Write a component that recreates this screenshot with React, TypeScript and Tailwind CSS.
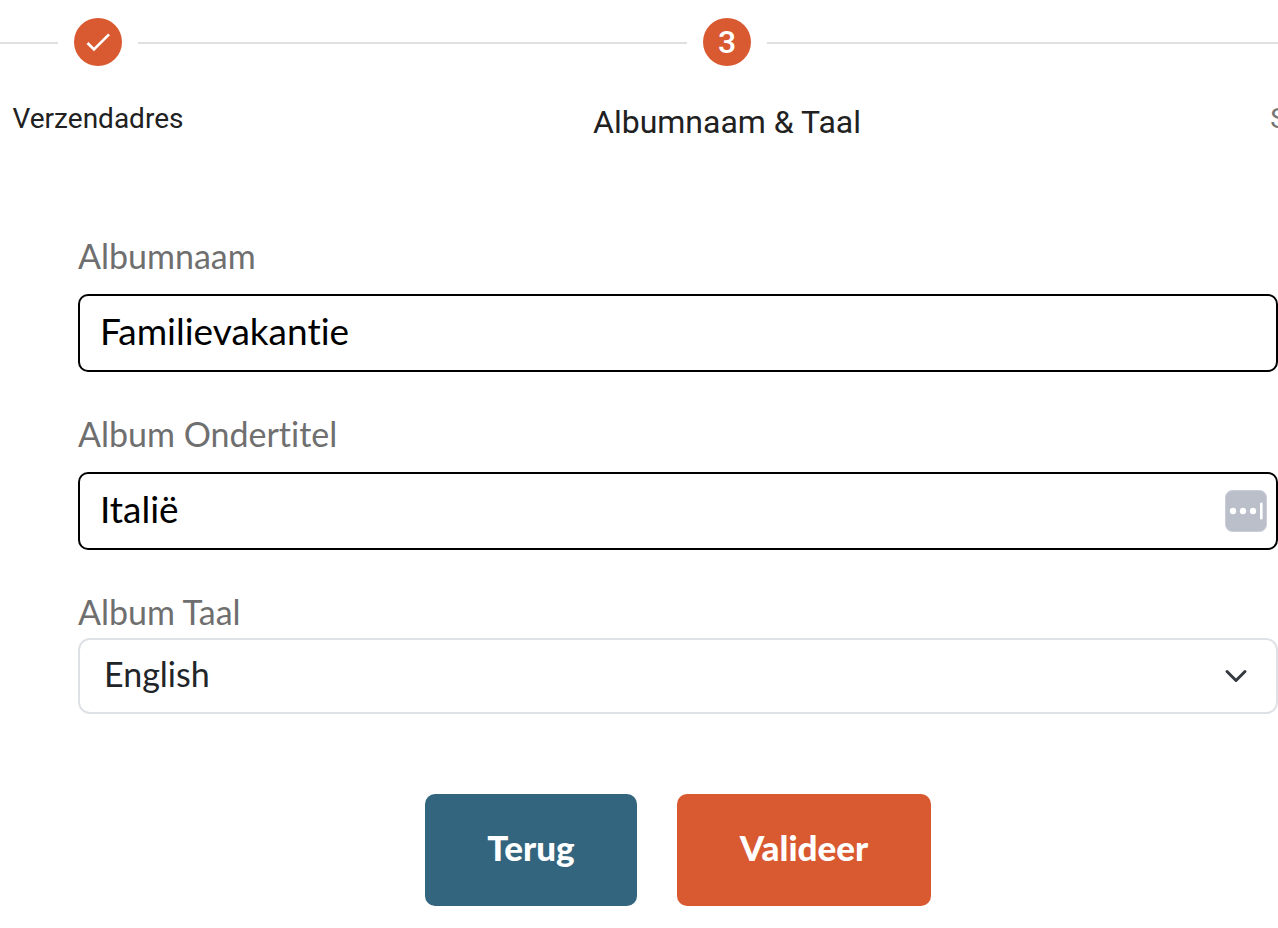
import { useState } from "react";
import type { FormEvent } from "react";

type StepStatus = "done" | "active" | "upcoming";

type Step = {
  number: number;
  label: string;
  status: StepStatus;
};

const steps: Step[] = [
  { number: 2, label: "Verzendadres", status: "done" },
  { number: 3, label: "Albumnaam & Taal", status: "active" },
  { number: 4, label: "Samenvatting", status: "upcoming" },
];

const languages = ["English", "Nederlands", "Français", "Deutsch"];

const labelClass = "block text-[34px] leading-11 text-[#6f6f6f]";
const inputClass =
  "block h-[78px] w-full rounded-[10px] border-2 border-black bg-white pr-16 pb-1.5 pl-5 text-[37px] text-black outline-none";

export default function App() {
  return (
    <main className="overflow-hidden bg-white pb-6 font-['Lato',sans-serif] [font-variant-ligatures:none]">
      <Stepper />
      <AlbumForm />
    </main>
  );
}

function Stepper() {
  return (
    <ol className="-mr-44 flex pt-[18px] font-['Roboto',sans-serif]">
      {steps.map((step, index) => (
        <li key={step.number} className={index === 0 ? "flex" : "flex flex-auto"}>
          {index > 0 ? <Line /> : null}
          <StepItem step={step} />
        </li>
      ))}
    </ol>
  );
}

function StepItem({ step }: { step: Step }) {
  const isActive = step.status === "active";

  return (
    <div
      aria-current={isActive ? "step" : undefined}
      className={`flex shrink-0 flex-col ${isActive ? "w-[294px]" : "w-[196px]"}`}
    >
      <div className="flex gap-4">
        <Line />
        <span
          className={`flex size-12 items-center justify-center rounded-full text-[32px] font-medium text-white ${
            step.status === "upcoming" ? "bg-[#757575]" : "bg-[#d95930]"
          }`}
        >
          {step.status === "done" ? <CheckIcon /> : step.number}
        </span>
        <Line />
      </div>
      <span
        className={`mt-8 text-center whitespace-nowrap ${
          isActive
            ? "text-[32px] leading-11 text-[#212121]"
            : step.status === "done"
              ? "text-[28px] leading-[38px] text-[#212121]"
              : "text-[28px] leading-[38px] text-[#757575]"
        }`}
      >
        {step.label}
      </span>
    </div>
  );
}

function Line() {
  return (
    <span aria-hidden="true" className="flex h-[50px] flex-1 items-center">
      <span className="h-0.5 w-full bg-[#e0e0e0]" />
    </span>
  );
}

function AlbumForm() {
  const [name, setName] = useState("Familievakantie");
  const [subtitle, setSubtitle] = useState("Italië");
  const [language, setLanguage] = useState("English");

  function handleSubmit(event: FormEvent) {
    event.preventDefault();
  }

  return (
    <form onSubmit={handleSubmit} className="mt-[90px] pl-[78px]">
      <div className="space-y-10">
        <div>
          <label htmlFor="album-name" className={labelClass}>
            Albumnaam
          </label>
          <input
            id="album-name"
            type="text"
            value={name}
            onChange={(event) => setName(event.target.value)}
            className={`mt-4 ${inputClass}`}
          />
        </div>

        <div>
          <label htmlFor="album-subtitle" className={labelClass}>
            Album Ondertitel
          </label>
          <div className="relative mt-4">
            <input
              id="album-subtitle"
              type="text"
              value={subtitle}
              onChange={(event) => setSubtitle(event.target.value)}
              className={inputClass}
            />
            <div className="pointer-events-none absolute inset-y-0 right-[11px] flex items-center">
              <AutofillIcon />
            </div>
          </div>
        </div>

        <div>
          <label htmlFor="album-language" className={labelClass}>
            Album Taal
          </label>
          <div className="relative mt-1">
            <select
              id="album-language"
              value={language}
              onChange={(event) => setLanguage(event.target.value)}
              className="block h-[76px] w-full appearance-none rounded-xl border-2 border-[#dee2e6] bg-white pr-16 pb-1.5 pl-6 text-[34px] text-[#212529] outline-none"
            >
              {languages.map((item) => (
                <option key={item} value={item}>
                  {item}
                </option>
              ))}
            </select>
            <div className="pointer-events-none absolute inset-y-0 right-[30px] flex items-center">
              <ChevronIcon />
            </div>
          </div>
        </div>
      </div>

      <div className="mt-20 flex justify-center gap-10">
        <button
          type="button"
          className="h-28 w-[212px] rounded-[10px] bg-[#33657e] pb-1.5 text-[35px] font-black text-white"
        >
          Terug
        </button>
        <button
          type="submit"
          className="h-28 w-[254px] rounded-[10px] bg-[#d95930] pb-1.5 text-[35px] font-black text-white"
        >
          Valideer
        </button>
      </div>
    </form>
  );
}

function CheckIcon() {
  return (
    <svg viewBox="0 0 24 24" className="size-8" fill="#fff" aria-hidden="true">
      <path d="M9 16.17 4.83 12l-1.42 1.41L9 19 21 7l-1.41-1.41z" />
    </svg>
  );
}

function AutofillIcon() {
  return (
    <svg viewBox="0 0 42 42" className="size-[42px]" aria-hidden="true">
      <rect x="0.5" y="0.5" width="41" height="41" rx="7" fill="#bbbfca" stroke="#cbced8" />
      <circle cx="8" cy="21" r="3.2" fill="#fff" />
      <circle cx="18" cy="21" r="3.2" fill="#fff" />
      <circle cx="28" cy="21" r="3.2" fill="#fff" />
      <rect x="35" y="12.5" width="2.6" height="17" rx="1.3" fill="#fff" />
    </svg>
  );
}

function ChevronIcon() {
  return (
    <svg viewBox="0 0 16 16" className="size-6" fill="none" aria-hidden="true">
      <path d="m2 5 6 6 6-6" stroke="#343a40" strokeWidth="2" strokeLinecap="round" strokeLinejoin="round" />
    </svg>
  );
}
